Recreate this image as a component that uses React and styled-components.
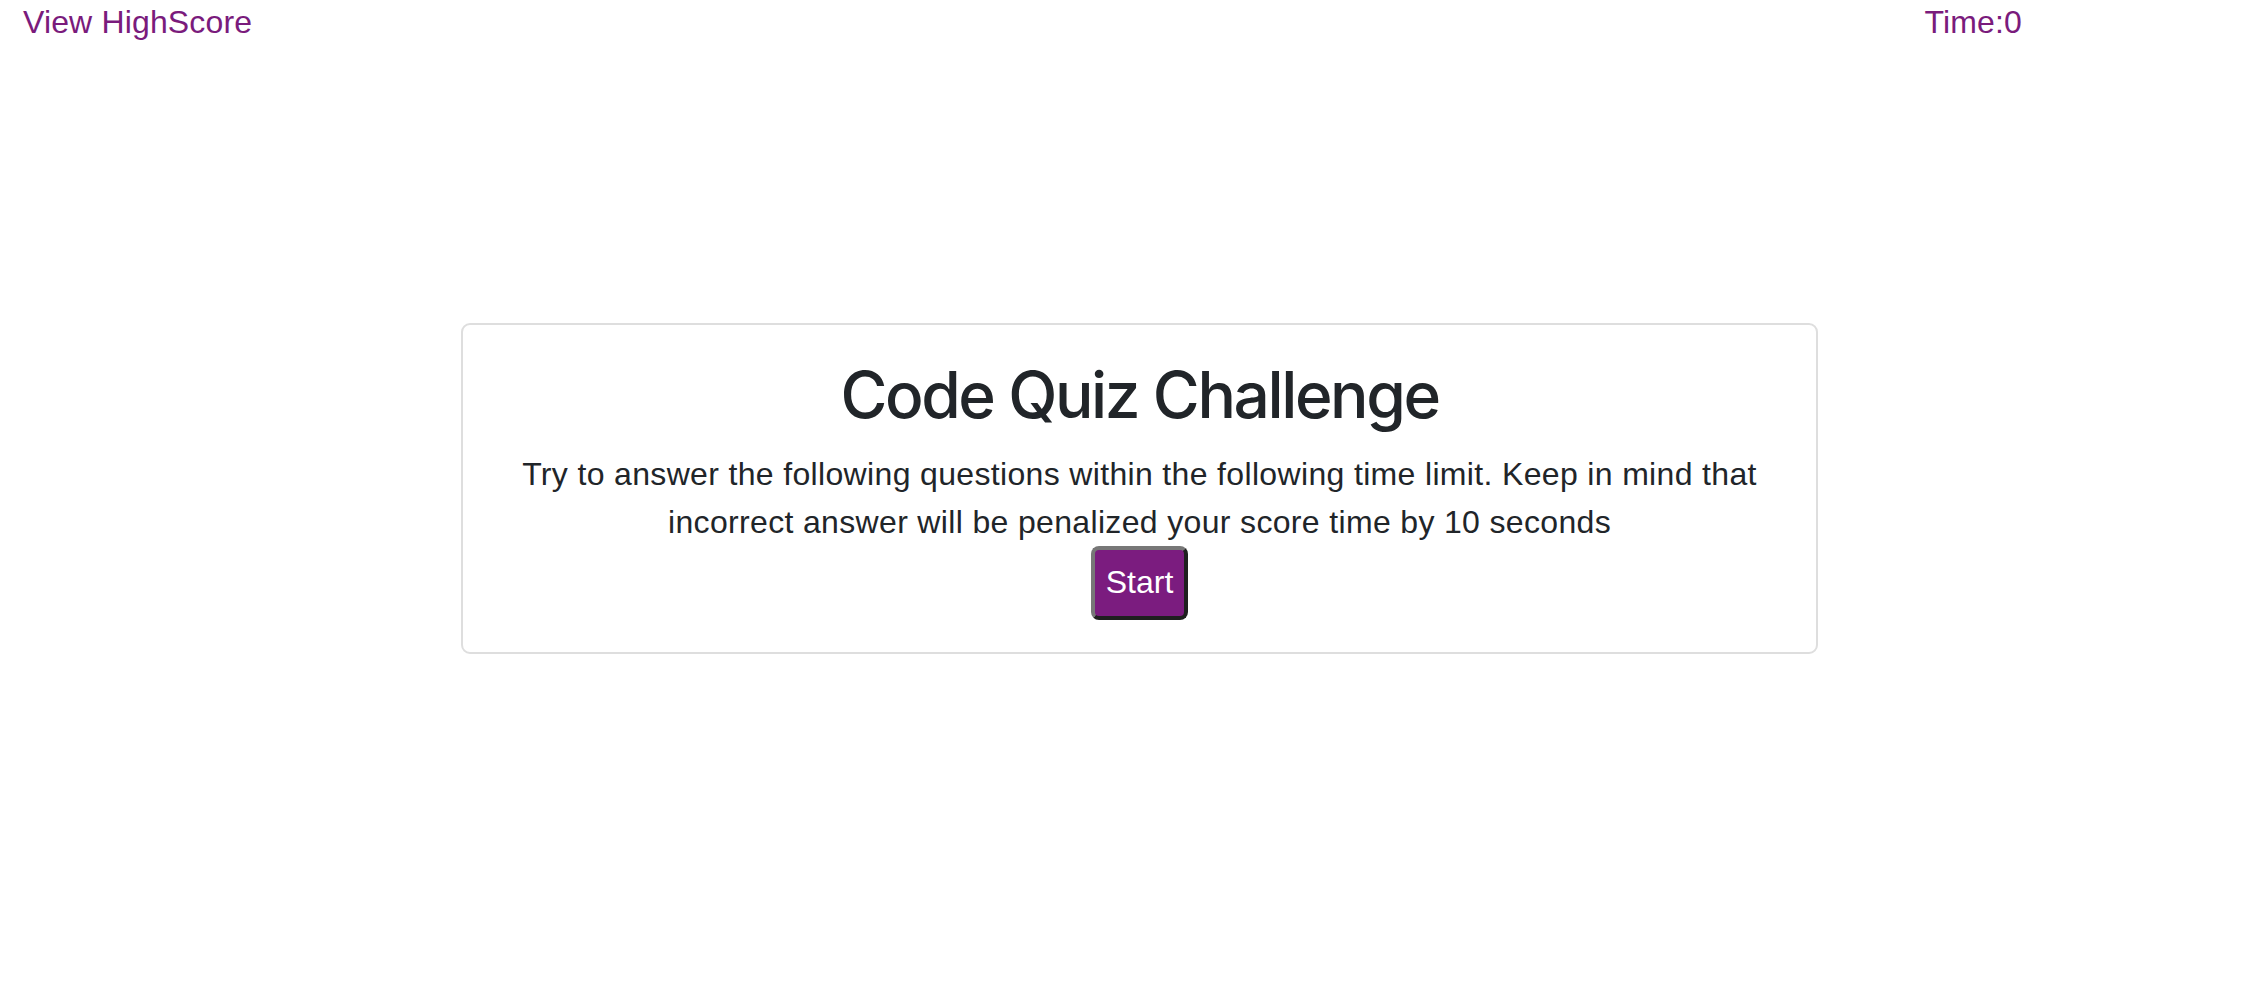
import React from "react";
import styled, { createGlobalStyle } from "styled-components";

const Global = createGlobalStyle`
  html, body { margin: 0; padding: 0; background: #fff; }
  body {
    font-family: "Liberation Sans", Arial, sans-serif;
    font-size: 32px;
    line-height: 1.5;
    color: #212529;
  }
  * { box-sizing: border-box; }
`;

const Header = styled.header`
  display: flex;
  justify-content: space-between;
  align-items: flex-start;
  padding: 0 224px 0 23px;
  line-height: 44px;
  letter-spacing: 0.15px;
`;

const HeaderLink = styled.a`
  color: #7a1b7c;
  text-decoration: none;
  cursor: pointer;
`;

const Timer = styled.div`
  color: #7a1b7c;
`;

const Card = styled.section`
  width: 1357px;
  margin: 279px 0 0 461px;
  padding: 32px 40px;
  border: 2px solid #dedede;
  border-radius: 9px;
  display: flex;
  flex-direction: column;
  align-items: center;
  text-align: center;
`;

const Title = styled.h1`
  margin: 0 0 16px;
  font-family: Inter, "Liberation Sans", sans-serif;
  font-size: 64px;
  font-weight: 500;
  line-height: 1.2;
  letter-spacing: -2.4px;
  color: #212529;
`;

const Intro = styled.p`
  margin: 0;
  font-size: 32px;
  line-height: 48px;
  max-width: 1270px;
  letter-spacing: 0.34px;
`;

const StartButton = styled.button`
  width: 97px;
  height: 74px;
  padding: 0;
  font-family: inherit;
  font-size: 32px;
  color: #fff;
  background: #7b1c7f;
  border: 4px solid;
  border-color: #777 #1f1f1f #1f1f1f #777;
  border-radius: 8px;
  cursor: pointer;
`;

export default function App() {
  return (
    <>
      <Global />
      <Header>
        <HeaderLink>View HighScore</HeaderLink>
        <Timer>Time:0</Timer>
      </Header>
      <Card>
        <Title>Code Quiz Challenge</Title>
        <Intro>
          Try to answer the following questions within the following time limit. Keep in mind that
          incorrect answer will be penalized your score time by 10 seconds
        </Intro>
        <StartButton>Start</StartButton>
      </Card>
    </>
  );
}
